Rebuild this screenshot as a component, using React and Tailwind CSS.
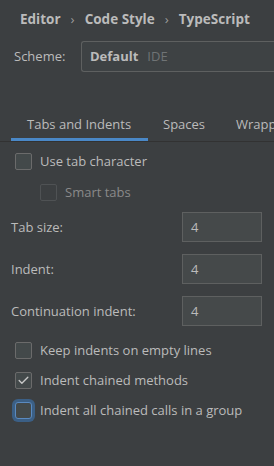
import { Check } from 'lucide-react'

function Checkbox({ checked, focused, disabled, label, indent }) {
  return (
    <div className={`flex items-center h-[17px] ${indent ? 'pl-[40px]' : 'pl-[15px]'}`}>
      <div
        className={`shrink-0 w-[17px] h-[17px] rounded-[2px] border flex items-center justify-center ${
          focused
            ? 'border-[#5a8ac0] bg-[#43494a] ring-[3px] ring-[#3b5f85] rounded-[3px]'
            : disabled
            ? 'border-[#4f5254] bg-[#3c3f41]'
            : 'border-[#6b6b6b] bg-[#43494a]'
        }`}
      >
        {checked && <Check className="w-[13px] h-[13px] text-[#c8c8c8]" strokeWidth={2.5} />}
      </div>
      <span className={`ml-[8px] whitespace-nowrap ${disabled ? 'text-[#8a8a8a]' : 'text-[#bbbbbb]'}`}>{label}</span>
    </div>
  )
}

function Field({ label }) {
  return (
    <div className="flex items-center justify-between pl-[11px] pr-[12px] h-[30px]">
      <span className="text-[#bbbbbb]">{label}</span>
      <div className="w-[80px] h-[30px] border border-[#5e6060] bg-[#45494a] flex items-center pl-[8px] text-[#bbbbbb]">
        4
      </div>
    </div>
  )
}

export default function App() {
  return (
    <div
      className="w-[274px] h-[466px] bg-[#3c3f41] overflow-hidden text-[13px] leading-none"
      style={{ fontFamily: '"Open Sans", "Noto Sans", sans-serif' }}
    >
      {/* Breadcrumb */}
      <div className="flex items-center h-[38px] pl-[20px] pt-[1px] font-bold text-[#bbbbbb] text-[13.5px] whitespace-nowrap">
        <span>Editor</span>
        <span className="mx-[10px] font-normal text-[#9a9a9a]">›</span>
        <span>Code Style</span>
        <span className="mx-[10px] font-normal text-[#9a9a9a]">›</span>
        <span>TypeScript</span>
      </div>

      {/* Scheme */}
      <div className="flex items-center mt-[3px] pl-[14px]">
        <span className="text-[#bbbbbb] w-[67px]">Scheme:</span>
        <div className="flex-1 h-[31px] border border-r-0 border-[#5e6060] bg-[#3e4244] rounded-l-[3px] flex items-center pl-[8px]">
          <span className="font-bold text-[#bbbbbb]">Default</span>
          <span className="ml-[9px] text-[#6f7375]">IDE</span>
        </div>
      </div>

      {/* Tabs */}
      <div className="mt-[42px] flex items-end border-b border-[#323232] h-[28px] whitespace-nowrap overflow-hidden">
        <div className="shrink-0 ml-[11px] w-[137px] h-full flex flex-col justify-between">
          <span className="text-[#bbbbbb] pl-[16px] pt-[4px]">Tabs and Indents</span>
          <div className="h-[3px] bg-[#4a88c7]" />
        </div>
        <span className="shrink-0 ml-[15px] mb-[10px] text-[#bbbbbb]">Spaces</span>
        <span className="shrink-0 ml-[31px] mb-[10px] text-[#bbbbbb]">Wrapping</span>
      </div>

      <div className="mt-[11px] flex flex-col gap-[14px]">
        <Checkbox label="Use tab character" />
        <Checkbox label="Smart tabs" indent disabled />
      </div>

      <div className="mt-[11px] flex flex-col gap-[12px]">
        <Field label="Tab size:" />
        <Field label="Indent:" />
        <Field label="Continuation indent:" />
      </div>

      <div className="mt-[16px] flex flex-col gap-[13px]">
        <Checkbox label="Keep indents on empty lines" />
        <Checkbox label="Indent chained methods" checked />
        <Checkbox label="Indent all chained calls in a group" focused />
      </div>
    </div>
  )
}
